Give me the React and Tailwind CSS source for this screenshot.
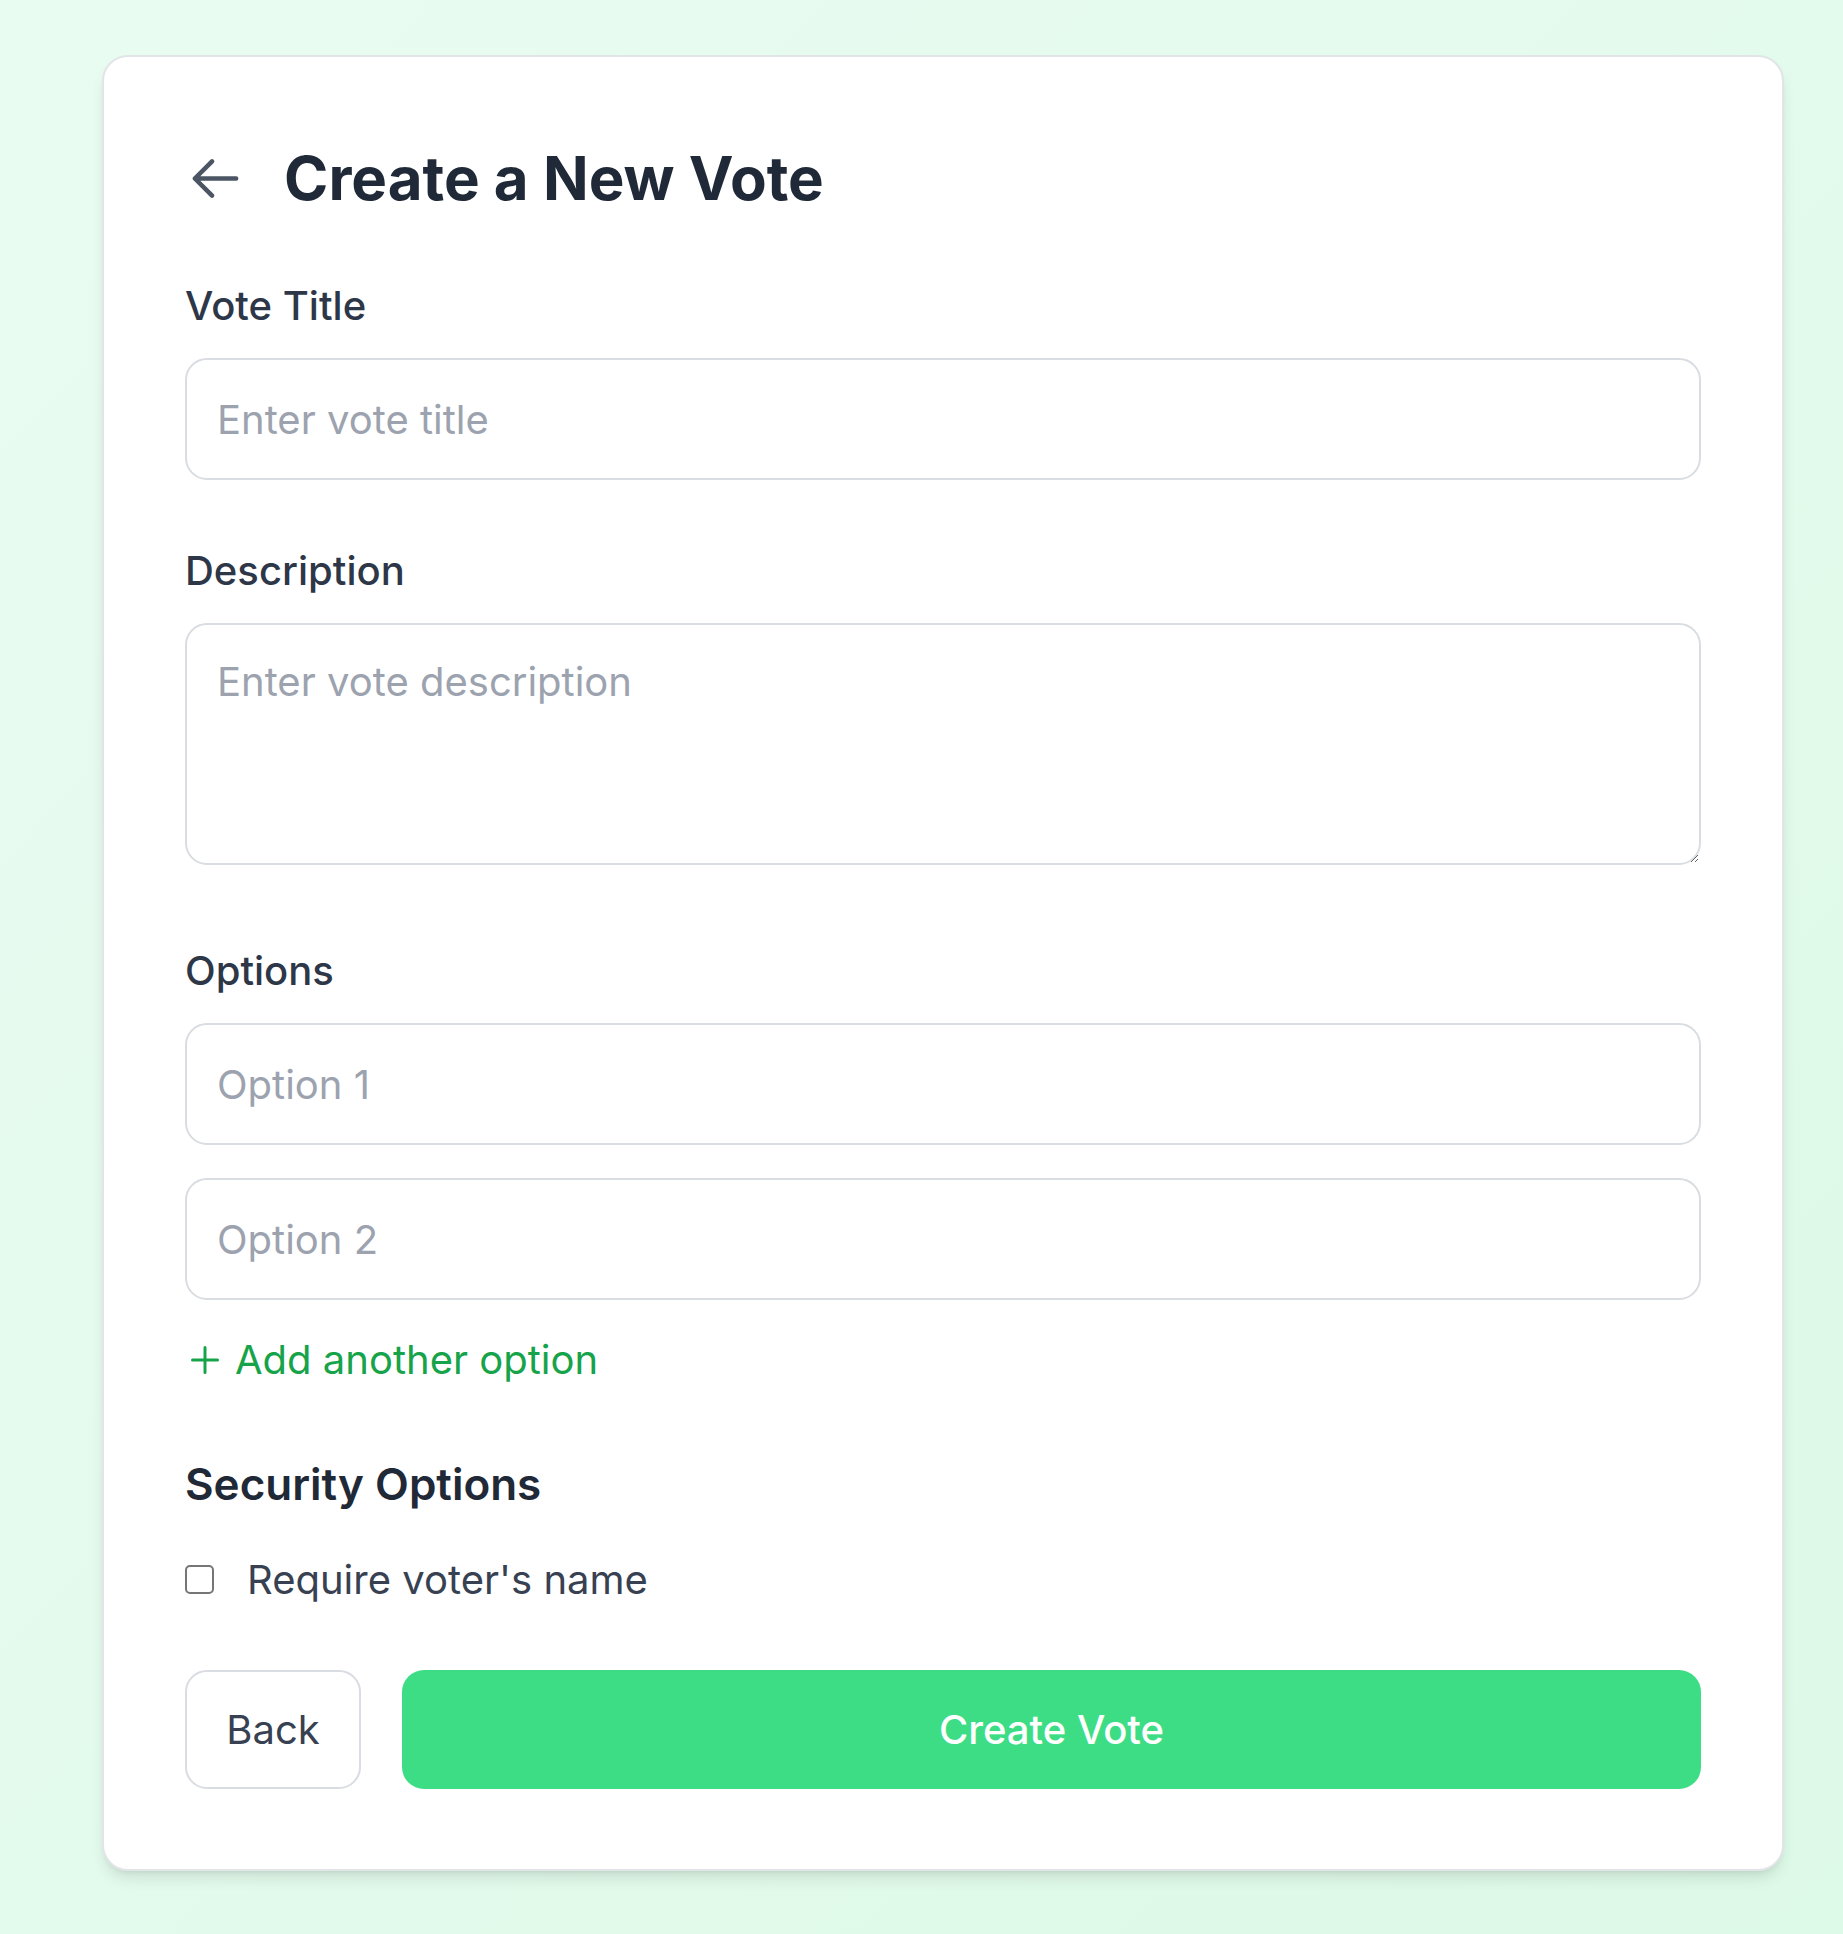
import React, { useState } from 'react';

function ArrowLeft({ className }) {
  return (
    <svg viewBox="0 0 24 24" fill="none" stroke="currentColor" strokeWidth="2" strokeLinecap="round" strokeLinejoin="round" className={className}>
      <path d="M10.5 19.5 3 12m0 0 7.5-7.5M3 12h18" />
    </svg>
  );
}

function PlusIcon({ className }) {
  return (
    <svg viewBox="0 0 28 28" fill="none" stroke="currentColor" strokeWidth="3" strokeLinecap="round" className={className}>
      <path d="M14 1.5v25M1.5 14h25" />
    </svg>
  );
}

const inputClass =
  'block w-full h-[122px] rounded-[22px] border-2 border-[#d9dce1] bg-white px-[30px] text-[40px] leading-[53px] text-[#1f2937] placeholder:text-[#9ca3af] outline-none';

export default function App() {
  const [options, setOptions] = useState(['', '']);
  const [requireName, setRequireName] = useState(false);

  return (
    <div className="min-h-screen bg-linear-to-br from-[#e9fcf1] to-[#ddf9e7] pt-[55px] pl-[102px] pr-[59px] pb-[63px] font-['Inter',sans-serif]">
      <div className="rounded-[26px] border-2 border-[#e1e5e8] bg-white px-[81px] pt-[78px] pb-[80px] shadow-lg">
        <div className="flex h-[86px] items-center gap-[41px]">
          <button type="button" className="ml-[3px] text-[#4b5563]" aria-label="Go back">
            <ArrowLeft className="h-[55px] w-[55px]" />
          </button>
          <h1 className="text-[60px] font-bold leading-[72px] text-[#1f2937]">Create a New Vote</h1>
        </div>

        <label className="mt-[58px] mb-[26px] block text-[40px] font-medium leading-[53px] text-[#2d3748]">Vote Title</label>
        <input type="text" placeholder="Enter vote title" className={inputClass} />

        <label className="mt-[64px] mb-[26px] block text-[40px] font-medium leading-[53px] text-[#2d3748]">Description</label>
        <textarea
          placeholder="Enter vote description"
          className="block h-[242px] w-full rounded-[22px] border-2 border-[#d9dce1] bg-white px-[30px] py-[30px] text-[40px] leading-[53px] text-[#1f2937] placeholder:text-[#9ca3af] outline-none"
        />

        <label className="mt-[79px] mb-[26px] block text-[40px] font-medium leading-[53px] text-[#2d3748]">Options</label>
        <div className="flex flex-col gap-[33px]">
          {options.map((opt, i) => (
            <input
              key={i}
              type="text"
              value={opt}
              onChange={(e) => setOptions(options.map((o, j) => (j === i ? e.target.value : o)))}
              placeholder={`Option ${i + 1}`}
              className={inputClass}
            />
          ))}
        </div>

        <button
          type="button"
          onClick={() => setOptions([...options, ''])}
          className="mt-[33px] flex h-[53px] items-center gap-[16px] text-[40px] leading-[53px] text-[#16a34a]"
        >
          <PlusIcon className="ml-[6px] h-[28px] w-[28px]" />
          Add another option
        </button>

        <h2 className="mt-[68px] text-[44px] font-semibold leading-[60px] text-[#1f2937]">Security Options</h2>

        <label className="mt-[39px] flex h-[53px] items-center gap-[33px]">
          <input
            type="checkbox"
            checked={requireName}
            onChange={(e) => setRequireName(e.target.checked)}
            className="h-[29px] w-[29px] appearance-none rounded-[5px] border-2 border-[#767676] bg-white checked:bg-[#16a34a]"
          />
          <span className="text-[40px] leading-[53px] text-[#374151]">Require voter's name</span>
        </label>

        <div className="mt-[64px] flex h-[119px] gap-[41px]">
          <button
            type="button"
            className="w-[176px] rounded-[22px] border-2 border-[#d9dce1] bg-white text-[40px] text-[#374151]"
          >
            Back
          </button>
          <button
            type="button"
            className="flex-1 rounded-[22px] bg-[#3ddd86] text-[40px] font-medium text-white"
          >
            Create Vote
          </button>
        </div>
      </div>
    </div>
  );
}
